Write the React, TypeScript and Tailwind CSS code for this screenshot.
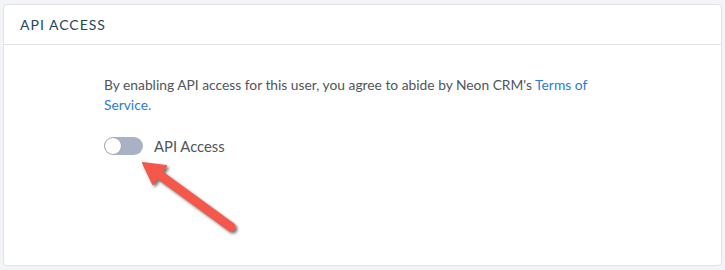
export default function App() {
  return (
    <div className="relative w-[725px] h-[270px] bg-[#f3f4f7] pt-[4px] pb-[4px] px-[3px] font-['Lato','Liberation_Sans',sans-serif]">
      <div className="h-full bg-white border border-[#e1e3e8] rounded-[4px] flex flex-col">
        <div className="h-[40px] border-b border-[#e1e3e8] flex items-center pl-[16px]">
          <h2 className="text-[14px] text-[#24465c] tracking-[1px]">API ACCESS</h2>
        </div>
        <div className="pl-[100px] pt-[30px]">
          <p className="w-[495px] text-[13.8px] leading-[20px] text-[#50555c]">
            By enabling API access for this user, you agree to abide by Neon CRM's{' '}
            <a className="text-[#2a7bd4]" href="#">Terms of Service.</a>
          </p>
          <label className="mt-[22px] flex items-center gap-[11px]">
            <span className="relative w-[39px] h-[18px] rounded-full bg-[#a9b2c4]">
              <span className="absolute left-[1px] top-[1px] w-[16px] h-[16px] rounded-full bg-white shadow-[0_0_1px_rgba(0,0,0,0.3)]" />
            </span>
            <span className="text-[14.8px] leading-[18px] text-[#50555c]">API Access</span>
          </label>
        </div>
      </div>
      <svg
        className="absolute inset-0 pointer-events-none"
        width="725"
        height="270"
        viewBox="0 0 725 270"
        style={{ filter: 'drop-shadow(2px 2px 1.5px rgba(0,0,0,0.55))' }}
      >
        <line x1="157" y1="173" x2="231" y2="227" stroke="#f5574a" strokeWidth="9" strokeLinecap="round" />
        <polygon points="143,163 166,166 153,184" fill="#f5574a" stroke="#f5574a" strokeWidth="2" strokeLinejoin="round" />
      </svg>
    </div>
  );
}
